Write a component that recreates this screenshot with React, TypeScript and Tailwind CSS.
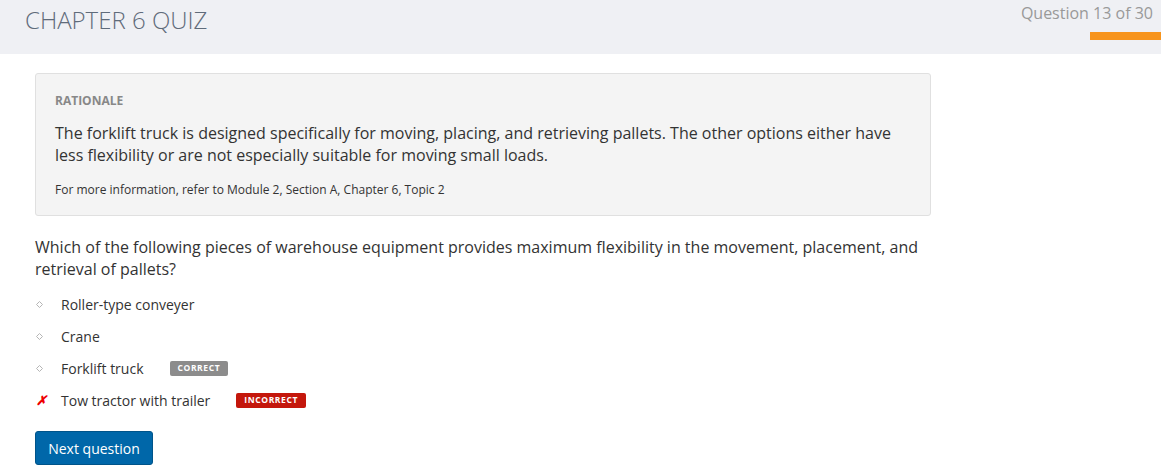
import React from 'react';

const options = [
  { label: 'Roller-type conveyer', status: null },
  { label: 'Crane', status: null },
  { label: 'Forklift truck', status: 'correct' },
  { label: 'Tow tractor with trailer', status: 'incorrect' },
];

const Diamond = () => (
  <svg width="7" height="7" viewBox="0 0 7 7">
    <path d="M3.5 0.5 L6.5 3.5 L3.5 6.5 L0.5 3.5 Z" fill="none" stroke="#b5b5b5" strokeWidth="1" />
  </svg>
);

export default function App() {
  return (
    <div className="w-[1161px] h-[469px] bg-white overflow-hidden font-['Open_Sans',sans-serif]">
      <div className="h-[54px] bg-[#eff0f4] flex justify-between">
        <h1 className="pl-[25px] pt-[5px] text-[24px] font-light text-[#5f6b7a] leading-[30px]">
          CHAPTER 6 QUIZ
        </h1>
        <div className="flex flex-col items-end">
          <span className="pr-[8px] pt-[2px] text-[16px] text-[#999] leading-[22px]">Question 13 of 30</span>
          <div className="mt-[8px] w-[71px] h-[8px] bg-[#f7941d]" />
        </div>
      </div>

      <div className="px-[35px] pt-[19px]">
        <div className="w-[896px] h-[143px] bg-[#f4f4f4] border border-[#e0e0e0] rounded-[3px] pl-[19px] pt-[18px]">
          <p className="text-[12px] font-bold text-[#888] leading-[18px]">RATIONALE</p>
          <p className="mt-[12px] text-[16px] text-[#333] leading-[22px] w-[850px]">
            The forklift truck is designed specifically for moving, placing, and retrieving pallets. The other options either have less flexibility or are not especially suitable for moving small loads.
          </p>
          <p className="mt-[15px] text-[12px] text-[#333] leading-[18px]">
            For more information, refer to Module 2, Section A, Chapter 6, Topic 2
          </p>
        </div>

        <p className="mt-[20px] w-[890px] text-[16px] text-[#333] leading-[22px]">
          Which of the following pieces of warehouse equipment provides maximum flexibility in the movement, placement, and retrieval of pallets?
        </p>

        <ul className="mt-[14px] flex flex-col gap-[12px]">
          {options.map((o) => (
            <li key={o.label} className="flex items-center h-[20px] text-[14px] text-[#333]">
              <span className="w-[26px] flex items-center pl-[1px]">
                {o.status === 'incorrect' ? (
                  <span className="text-[#e00] text-[13px] font-bold italic leading-none">✗</span>
                ) : (
                  <Diamond />
                )}
              </span>
              <span>{o.label}</span>
              {o.status === 'correct' && (
                <span className="ml-[26px] px-[8px] h-[15px] flex items-center bg-[#8c8c8c] text-white text-[8.5px] font-bold tracking-[0.6px] rounded-[2px]">
                  CORRECT
                </span>
              )}
              {o.status === 'incorrect' && (
                <span className="ml-[26px] px-[8px] h-[15px] flex items-center bg-[#c4170c] text-white text-[8.5px] font-bold tracking-[0.6px] rounded-[2px]">
                  INCORRECT
                </span>
              )}
            </li>
          ))}
        </ul>

        <button className="mt-[21px] w-[118px] h-[34px] bg-[#0067a9] border border-[#00548a] rounded-[3px] text-white text-[14px]">
          Next question
        </button>
      </div>
    </div>
  );
}
